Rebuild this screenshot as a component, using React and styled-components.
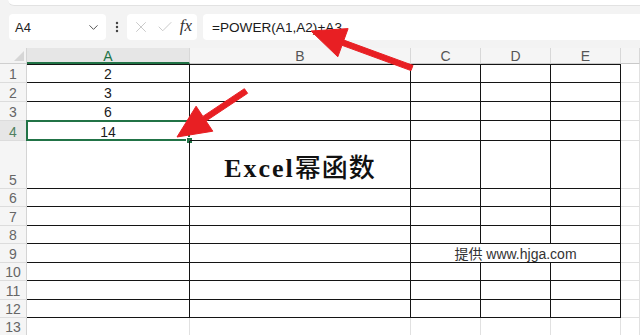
import React from 'react';
import styled, { createGlobalStyle } from 'styled-components';
import { ChevronDown, X, Check, EllipsisVertical } from 'lucide-react';

const Global = createGlobalStyle`
  html, body { margin: 0; padding: 0; background: #f3f3f3; }
  body { width: 640px; height: 335px; overflow: hidden; font-family: "Liberation Sans", Arial, sans-serif; }
`;

const Page = styled.div`
  position: relative;
  width: 640px;
  height: 335px;
  overflow: hidden;
  background: #f3f3f3;
`;

const Ribbon = styled.div`
  height: 5px;
  margin-left: 8px;
  background: #ffffff;
  border-radius: 0 0 0 6px;
  border-bottom: 1px solid #e2e2e2;
`;

const Bar = styled.div`
  display: flex;
  align-items: center;
  height: 26px;
  padding: 8px 0 8px 9px;
`;

const NameBox = styled.div`
  width: 97px;
  height: 26px;
  box-sizing: border-box;
  display: flex;
  align-items: center;
  justify-content: space-between;
  padding: 0 5px 0 6px;
  background: #fff;
  border-radius: 4px;
  font-size: 13px;
  color: #222;
  svg { color: #555; }
`;

const Dots = styled.div`
  width: 21px;
  display: flex;
  justify-content: center;
  color: #444;
`;

const IconBox = styled.div`
  width: 70px;
  height: 26px;
  box-sizing: border-box;
  display: flex;
  align-items: center;
  justify-content: space-between;
  padding: 0 5px 0 5px;
  background: #fff;
  border-radius: 4px;
  margin-right: 6px;
  color: #c4c4c4;
`;

const Fx = styled.span`
  font-family: "Liberation Serif", "Times New Roman", serif;
  font-style: italic;
  font-size: 17px;
  color: #333;
  padding-bottom: 2px;
`;

const FormulaBox = styled.div`
  flex: 1;
  height: 26px;
  display: flex;
  align-items: center;
  padding-left: 9px;
  background: #fff;
  border-radius: 4px 0 0 4px;
  font-size: 13.6px;
  color: #1a1a1a;
`;

const Grid = styled.div`
  display: grid;
  grid-template-columns: 27px 163px 221px 70px 70px 70px 1fr;
  grid-template-rows: 16px 19px 19px 19px 20px 48px 18px 19px 18px 19px 18px 19px 18px 18px;
  background: #fff;
`;

const Corner = styled.div`
  position: relative;
  background: #f3f3f3;
  border-right: 1px solid #d4d4d4;
  border-bottom: 1px solid #cfcfcf;
  &::after {
    content: "";
    position: absolute;
    right: 2px;
    bottom: 2px;
    border-style: solid;
    border-width: 0 0 10px 10px;
    border-color: transparent transparent #d6d6d6 transparent;
  }
`;

const ColHead = styled.div`
  box-sizing: border-box;
  display: flex;
  align-items: center;
  justify-content: center;
  background: ${p => (p.$active ? '#e6e6e6' : '#f5f5f5')};
  color: ${p => (p.$active ? '#217346' : '#555')};
  border-right: 1px solid #d8d8d8;
  border-bottom: ${p => (p.$active ? '2px solid #217346' : '1px solid #c9c9c9')};
  font-size: 14px;
  line-height: 1;
  padding-top: 1px;
`;

const RowHead = styled.div`
  box-sizing: border-box;
  display: flex;
  align-items: flex-end;
  justify-content: center;
  padding-bottom: 1px;
  background: ${p => (p.$active ? '#e6e6e6' : '#f5f5f5')};
  color: ${p => (p.$active ? '#4f7f60' : '#666')};
  border-right: 1px solid ${p => (p.$active ? '#217346' : '#d4d4d4')};
  border-bottom: 1px solid #dcdcdc;
  font-size: 14px;
  line-height: 1;
`;

const Cell = styled.div`
  position: relative;
  box-sizing: border-box;
  display: flex;
  align-items: ${p => (p.$middle ? 'center' : 'flex-end')};
  justify-content: center;
  padding-bottom: 1px;
  padding-top: ${p => (p.$middle ? '6px' : '0')};
  grid-column: ${p => (p.$span ? `span ${p.$span}` : 'auto')};
  border-right: 1px solid ${p => (p.$dark ? '#141414' : '#e1e1e1')};
  border-bottom: 1px solid ${p => (p.$dark ? '#141414' : '#e1e1e1')};
  border-top: ${p => (p.$top ? '1px solid #141414' : 'none')};
  font-size: 14px;
  color: #1a1a1a;
  line-height: 1;
`;

const Selection = styled.span`
  position: absolute;
  left: -1px;
  top: -1px;
  right: -1px;
  bottom: -1px;
  border: 2px solid #217346;
  pointer-events: none;
`;

const Handle = styled.span`
  position: absolute;
  right: -4px;
  bottom: -4px;
  width: 5px;
  height: 5px;
  background: #217346;
  border: 1px solid #fff;
`;

const Title = styled.span`
  font-size: 26px;
  color: #111;
  line-height: 1;
`;

const TitleLatin = styled.span`
  font-family: "Liberation Serif", serif;
  font-weight: bold;
  letter-spacing: 2px;
`;

const TitleCjk = styled.span`
  font-family: "Noto Sans CJK SC", sans-serif;
  font-weight: 500;
  letter-spacing: 1px;
`;

const Credit = styled.span`
  font-family: "Liberation Sans", "Noto Sans CJK SC", sans-serif;
  font-size: 14px;
  color: #333;
`;

const Overlay = styled.svg`
  position: absolute;
  left: 0;
  top: 0;
  pointer-events: none;
`;

function arrowPoints(x1, y1, x2, y2, head, hw, sw) {
  const dx = x2 - x1;
  const dy = y2 - y1;
  const len = Math.hypot(dx, dy);
  const ux = dx / len;
  const uy = dy / len;
  const px = -uy;
  const py = ux;
  const bx = x2 - ux * head;
  const by = y2 - uy * head;
  const pts = [
    [x1 + px * sw, y1 + py * sw],
    [bx + px * sw, by + py * sw],
    [bx + px * hw, by + py * hw],
    [x2, y2],
    [bx - px * hw, by - py * hw],
    [bx - px * sw, by - py * sw],
    [x1 - px * sw, y1 - py * sw],
  ];
  return pts.map(p => p.map(v => v.toFixed(1)).join(',')).join(' ');
}

const COLS = ['A', 'B', 'C', 'D', 'E', ''];
const VALUES = { 1: '2', 2: '3', 3: '6', 4: '14' };

export default function App() {
  const rows = [];
  for (let r = 1; r <= 13; r++) {
    const dark = r <= 12;
    rows.push(
      <RowHead key={`h${r}`} $active={r === 4}>
        {r}
      </RowHead>
    );
    rows.push(
      <Cell key={`a${r}`} $dark={dark} $top={r === 1}>
        {VALUES[r]}
        {r === 4 && (
          <>
            <Selection />
            <Handle />
          </>
        )}
      </Cell>
    );
    rows.push(
      <Cell key={`b${r}`} $dark={dark} $top={r === 1} $middle={r === 5}>
        {r === 5 && (
          <Title>
            <TitleLatin>Excel</TitleLatin>
            <TitleCjk>幂函数</TitleCjk>
          </Title>
        )}
      </Cell>
    );
    if (r === 9) {
      rows.push(
        <Cell key={`c${r}`} $dark $span={3}>
          <Credit>提供 www.hjga.com</Credit>
        </Cell>
      );
    } else {
      rows.push(<Cell key={`c${r}`} $dark={dark} $top={r === 1} />);
      rows.push(<Cell key={`d${r}`} $dark={dark} $top={r === 1} />);
      rows.push(<Cell key={`e${r}`} $dark={dark} $top={r === 1} />);
    }
    rows.push(<Cell key={`f${r}`} />);
  }

  return (
    <Page>
      <Global />
      <Ribbon />
      <Bar>
        <NameBox>
          <span>A4</span>
          <ChevronDown size={15} strokeWidth={1.6} />
        </NameBox>
        <Dots>
          <EllipsisVertical size={14} strokeWidth={2.2} />
        </Dots>
        <IconBox>
          <X size={18} strokeWidth={1.2} />
          <Check size={18} strokeWidth={1.2} />
          <Fx>fx</Fx>
        </IconBox>
        <FormulaBox>=POWER(A1,A2)+A3</FormulaBox>
      </Bar>
      <Grid>
        <Corner />
        {COLS.map((c, i) => (
          <ColHead key={i} $active={c === 'A'}>
            {c}
          </ColHead>
        ))}
        {rows}
      </Grid>
      <Overlay width="640" height="335" viewBox="0 0 640 335">
        <polygon points={arrowPoints(412, 68, 311, 31, 34, 15, 2.8)} fill="#e81f23" strokeLinejoin="round" stroke="#e81f23" strokeWidth="1" />
        <polygon points={arrowPoints(246, 91, 177, 137, 33, 15, 2.8)} fill="#e81f23" strokeLinejoin="round" stroke="#e81f23" strokeWidth="1" />
      </Overlay>
    </Page>
  );
}
